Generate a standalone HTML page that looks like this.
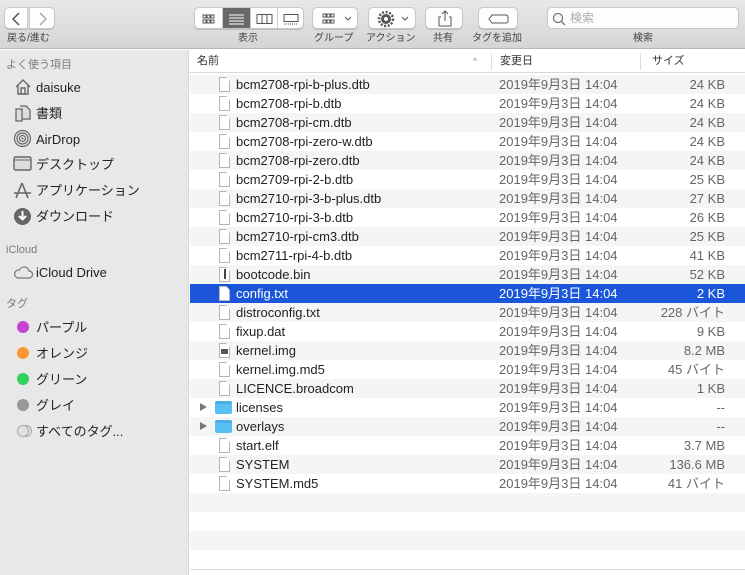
<!DOCTYPE html>
<html><head><meta charset="utf-8"><style>
*{margin:0;padding:0;box-sizing:border-box}
body{width:745px;height:575px;overflow:hidden;font-family:"Liberation Sans","Noto Sans CJK JP",sans-serif;background:#fff;position:relative;color:#222;line-height:15px}
.tb{position:absolute;left:0;top:0;width:745px;height:49px;background:linear-gradient(#e9e7e9,#d6d4d6);border-bottom:1px solid #b8b6b8}
.btn{position:absolute;top:7px;height:22px;background:#fdfdfd;border:1px solid #c8c6c8;border-radius:5px;box-shadow:0 1px 0 #bdbbbd}
.lbl{position:absolute;top:33px;font-size:10px;color:#444;white-space:nowrap;line-height:12px}
.side{position:absolute;left:0;top:50px;width:189px;height:525px;background:#e9e8e9;border-right:1px solid #d5d5d5}
.sh{position:absolute;left:6px;font-size:11px;color:#7b7b7b;line-height:13px}
.si{position:absolute;left:36px;font-size:13px;color:#222;line-height:16px;white-space:nowrap}
.dot{position:absolute;left:17px;width:12px;height:12px;border-radius:50%}
.main{position:absolute;left:190px;top:50px;width:555px;height:525px}
.hdr{position:absolute;left:0;top:0;width:555px;height:23px;border-bottom:1px solid #d8d8d8;font-size:11px;color:#333;background:#fff;line-height:13px}
.row{position:absolute;left:0;width:555px;height:19px;font-size:13px;line-height:15px}
.row.s{background:#f4f5f5}
.row.sel{background:#1b55d9;color:#fff}
.row .n{position:absolute;left:46px;top:2px;white-space:nowrap}
.row .d{position:absolute;left:309px;top:2px;color:#666;white-space:nowrap}
.row .z{position:absolute;right:20px;top:2px;color:#666;white-space:nowrap}
.row.sel .d,.row.sel .z{color:#fff}
.f{position:absolute;left:29px;top:2px;width:11px;height:15px;background:#fff;border:1px solid #b5b5b5;clip-path:polygon(0 0,65% 0,100% 28%,100% 100%,0 100%)}
.fo{position:absolute;left:25px;top:3px;width:17px;height:13px;background:#5ac0f3;border-radius:2px;border-top:3px solid #4aaee6}
.tri{position:absolute;left:10px;top:5px;width:0;height:0;border-left:7px solid #777;border-top:4.5px solid transparent;border-bottom:4.5px solid transparent}
</style></head><body>
<div class="tb">
<div class="btn" style="left:4px;width:24px;border-radius:5px 0 0 5px"><svg width="24" height="22"><path d="M14 5l-6 6 6 6" stroke="#555" stroke-width="1.5" fill="none"/></svg></div>
<div class="btn" style="left:29px;width:26px;border-radius:0 5px 5px 0"><svg width="26" height="22"><path d="M10 5l6 6-6 6" stroke="#aaa" stroke-width="1.5" fill="none"/></svg></div>
<div class="lbl" style="left:7px">戻る/進む</div>
<div class="btn" style="left:194px;width:110px;overflow:hidden">
<div style="position:absolute;left:28px;top:0;width:27px;height:22px;background:#696869"></div>
<svg width="110" height="22" style="position:absolute;left:0;top:0"><g fill="none" stroke="#555"><rect x="8" y="7" width="3" height="3"/><rect x="12" y="7" width="3" height="3"/><rect x="16" y="7" width="3" height="3"/><rect x="8" y="12" width="3" height="3"/><rect x="12" y="12" width="3" height="3"/><rect x="16" y="12" width="3" height="3"/><path d="M34 7h15M34 10h15M34 13h15M34 16h15" stroke="#fff"/><rect x="62" y="6.5" width="15" height="9"/><path d="M67 6.5v9M72 6.5v9"/><rect x="89" y="6.5" width="14" height="7"/><path d="M89 16h14" stroke-dasharray="1 1"/><path d="M55.5 0v22M82.5 0v22M27.5 0v22" stroke="#ccc"/></g></svg></div>
<div class="lbl" style="left:238px">表示</div>
<div class="btn" style="left:312px;width:46px"><svg width="46" height="22"><g fill="none" stroke="#555"><rect x="10" y="6" width="3" height="3"/><rect x="14" y="6" width="3" height="3"/><rect x="18" y="6" width="3" height="3"/><rect x="10" y="12" width="3" height="3"/><rect x="14" y="12" width="3" height="3"/><rect x="18" y="12" width="3" height="3"/><path d="M32 9l3 3 3-3"/></g></svg></div>
<div class="lbl" style="left:314px">グループ</div>
<div class="btn" style="left:368px;width:48px"><svg width="48" height="22"><circle cx="17" cy="11" r="5" fill="#555"/><circle cx="17" cy="11" r="7" fill="none" stroke="#555" stroke-width="2.5" stroke-dasharray="2 1.6"/><circle cx="17" cy="11" r="2" fill="#fff"/><path d="M33 9l3 3 3-3" stroke="#555" fill="none"/></svg></div>
<div class="lbl" style="left:366px">アクション</div>
<div class="btn" style="left:425px;width:38px"><svg width="38" height="22"><path d="M15 9h-2v9h12V9h-2M19 3v10M16 6l3-3 3 3" stroke="#555" fill="none"/></svg></div>
<div class="lbl" style="left:433px">共有</div>
<div class="btn" style="left:478px;width:40px"><svg width="40" height="22"><path d="M13 7h14a2 2 0 012 2v4a2 2 0 01-2 2H13l-3-4z" stroke="#555" fill="none"/></svg></div>
<div class="lbl" style="left:472px">タグを追加</div>
<div class="btn" style="left:547px;width:192px;box-shadow:none"><svg width="20" height="22"><circle cx="10" cy="10" r="4.5" stroke="#777" fill="none" stroke-width="1.3"/><path d="M13 13l4 4" stroke="#777" stroke-width="1.3"/></svg><span style="position:absolute;left:22px;top:3px;font-size:12px;color:#aaa">検索</span></div>
<div class="lbl" style="left:633px">検索</div>
</div>
<div class="side">
<div class="sh" style="top:9px">よく使う項目</div>
<svg style="position:absolute;left:14px;top:28px" width="18" height="18"><path d="M2 9l7-7 7 7M4 7v9h10V7M7 16v-6h4v6" stroke="#666" stroke-width="1.4" fill="none"/></svg>
<div class="si" style="top:30px">daisuke</div>
<svg style="position:absolute;left:14px;top:54px" width="18" height="18"><path d="M2 5h6v12H2zM6 2h6l4 4v9H8" stroke="#666" stroke-width="1.3" fill="#ddd"/></svg>
<div class="si" style="top:56px">書類</div>
<svg style="position:absolute;left:13px;top:79px" width="19" height="19"><g stroke="#666" fill="none" stroke-width="1.2"><circle cx="9.5" cy="9.5" r="8"/><circle cx="9.5" cy="9.5" r="5.5"/><circle cx="9.5" cy="9.5" r="3"/></g><circle cx="9.5" cy="9.5" r="1" fill="#666"/></svg>
<div class="si" style="top:82px">AirDrop</div>
<svg style="position:absolute;left:13px;top:106px" width="19" height="16"><rect x="1" y="1" width="17" height="13" rx="1.5" stroke="#666" fill="#ddd" stroke-width="1.4"/><path d="M1 4h17" stroke="#666"/></svg>
<div class="si" style="top:107px">デスクトップ</div>
<svg style="position:absolute;left:13px;top:131px" width="19" height="19"><path d="M9 2l-6 15M9 2l6 15M1 12h17" stroke="#666" stroke-width="1.6" fill="none"/></svg>
<div class="si" style="top:133px">アプリケーション</div>
<svg style="position:absolute;left:13px;top:157px" width="19" height="19"><circle cx="9.5" cy="9.5" r="8.5" fill="#666"/><path d="M9.5 4v8M6 9l3.5 3.5L13 9" stroke="#fff" stroke-width="2" fill="none"/></svg>
<div class="si" style="top:159px">ダウンロード</div>
<div class="sh" style="top:194px">iCloud</div>
<svg style="position:absolute;left:13px;top:215px" width="20" height="14"><path d="M5 13h11a3.5 3.5 0 000-7 5 5 0 00-9.5-1A4 4 0 005 13z" stroke="#777" fill="none" stroke-width="1.2"/></svg>
<div class="si" style="top:215px">iCloud Drive</div>
<div class="sh" style="top:248px">タグ</div>
<div class="dot" style="top:271px;background:#c643d6"></div><div class="si" style="top:270px">パープル</div>
<div class="dot" style="top:297px;background:#fb9733"></div><div class="si" style="top:296px">オレンジ</div>
<div class="dot" style="top:323px;background:#2fd25a"></div><div class="si" style="top:322px">グリーン</div>
<div class="dot" style="top:349px;background:#98979a"></div><div class="si" style="top:348px">グレイ</div>
<div class="dot" style="top:375px;background:#e0e0e0;border:1px solid #aaa;left:20px"></div><div class="dot" style="top:375px;background:#e0e0e0;border:1px solid #aaa"></div><div class="si" style="top:374px">すべてのタグ...</div>
</div>
<div class="main">
<div class="hdr"><span style="position:absolute;left:7px;top:5px">名前</span><span style="position:absolute;left:283px;top:5px;color:#888;font-size:9px">^</span><div style="position:absolute;left:301px;top:3px;width:1px;height:17px;background:#ddd"></div><span style="position:absolute;left:310px;top:5px">変更日</span><div style="position:absolute;left:450px;top:3px;width:1px;height:17px;background:#ddd"></div><span style="position:absolute;left:462px;top:5px">サイズ</span></div>
<div style="position:absolute;left:0;top:519px;width:555px;height:1px;background:#ddd"></div>
</div>
<div style="position:absolute;left:190px;top:75px;width:555px">
<div class="row s" style="top:0"><div class="f"></div><span class="n">bcm2708-rpi-b-plus.dtb</span><span class="d">2019年9月3日 14:04</span><span class="z">24 KB</span></div>
<div class="row" style="top:19px"><div class="f"></div><span class="n">bcm2708-rpi-b.dtb</span><span class="d">2019年9月3日 14:04</span><span class="z">24 KB</span></div>
<div class="row s" style="top:38px"><div class="f"></div><span class="n">bcm2708-rpi-cm.dtb</span><span class="d">2019年9月3日 14:04</span><span class="z">24 KB</span></div>
<div class="row" style="top:57px"><div class="f"></div><span class="n">bcm2708-rpi-zero-w.dtb</span><span class="d">2019年9月3日 14:04</span><span class="z">24 KB</span></div>
<div class="row s" style="top:76px"><div class="f"></div><span class="n">bcm2708-rpi-zero.dtb</span><span class="d">2019年9月3日 14:04</span><span class="z">24 KB</span></div>
<div class="row" style="top:95px"><div class="f"></div><span class="n">bcm2709-rpi-2-b.dtb</span><span class="d">2019年9月3日 14:04</span><span class="z">25 KB</span></div>
<div class="row s" style="top:114px"><div class="f"></div><span class="n">bcm2710-rpi-3-b-plus.dtb</span><span class="d">2019年9月3日 14:04</span><span class="z">27 KB</span></div>
<div class="row" style="top:133px"><div class="f"></div><span class="n">bcm2710-rpi-3-b.dtb</span><span class="d">2019年9月3日 14:04</span><span class="z">26 KB</span></div>
<div class="row s" style="top:152px"><div class="f"></div><span class="n">bcm2710-rpi-cm3.dtb</span><span class="d">2019年9月3日 14:04</span><span class="z">25 KB</span></div>
<div class="row" style="top:171px"><div class="f"></div><span class="n">bcm2711-rpi-4-b.dtb</span><span class="d">2019年9月3日 14:04</span><span class="z">41 KB</span></div>
<div class="row s" style="top:190px"><div class="f"></div><div style="position:absolute;left:34px;top:4px;width:2px;height:10px;background:#444"></div><span class="n">bootcode.bin</span><span class="d">2019年9月3日 14:04</span><span class="z">52 KB</span></div>
<div class="row sel" style="top:209px"><div class="f"></div><span class="n">config.txt</span><span class="d">2019年9月3日 14:04</span><span class="z">2 KB</span></div>
<div class="row s" style="top:228px"><div class="f"></div><span class="n">distroconfig.txt</span><span class="d">2019年9月3日 14:04</span><span class="z">228 バイト</span></div>
<div class="row" style="top:247px"><div class="f"></div><span class="n">fixup.dat</span><span class="d">2019年9月3日 14:04</span><span class="z">9 KB</span></div>
<div class="row s" style="top:266px"><div class="f"></div><div style="position:absolute;left:31px;top:8px;width:7px;height:5px;background:#555"></div><span class="n">kernel.img</span><span class="d">2019年9月3日 14:04</span><span class="z">8.2 MB</span></div>
<div class="row" style="top:285px"><div class="f"></div><span class="n">kernel.img.md5</span><span class="d">2019年9月3日 14:04</span><span class="z">45 バイト</span></div>
<div class="row s" style="top:304px"><div class="f"></div><span class="n">LICENCE.broadcom</span><span class="d">2019年9月3日 14:04</span><span class="z">1 KB</span></div>
<div class="row" style="top:323px"><div class="tri"></div><div class="fo"></div><span class="n">licenses</span><span class="d">2019年9月3日 14:04</span><span class="z">--</span></div>
<div class="row s" style="top:342px"><div class="tri"></div><div class="fo"></div><span class="n">overlays</span><span class="d">2019年9月3日 14:04</span><span class="z">--</span></div>
<div class="row" style="top:361px"><div class="f"></div><span class="n">start.elf</span><span class="d">2019年9月3日 14:04</span><span class="z">3.7 MB</span></div>
<div class="row s" style="top:380px"><div class="f"></div><span class="n">SYSTEM</span><span class="d">2019年9月3日 14:04</span><span class="z">136.6 MB</span></div>
<div class="row" style="top:399px"><div class="f"></div><span class="n">SYSTEM.md5</span><span class="d">2019年9月3日 14:04</span><span class="z">41 バイト</span></div>
<div class="row s" style="top:418px"></div>
<div class="row s" style="top:456px"></div>
</div>
</body></html>
